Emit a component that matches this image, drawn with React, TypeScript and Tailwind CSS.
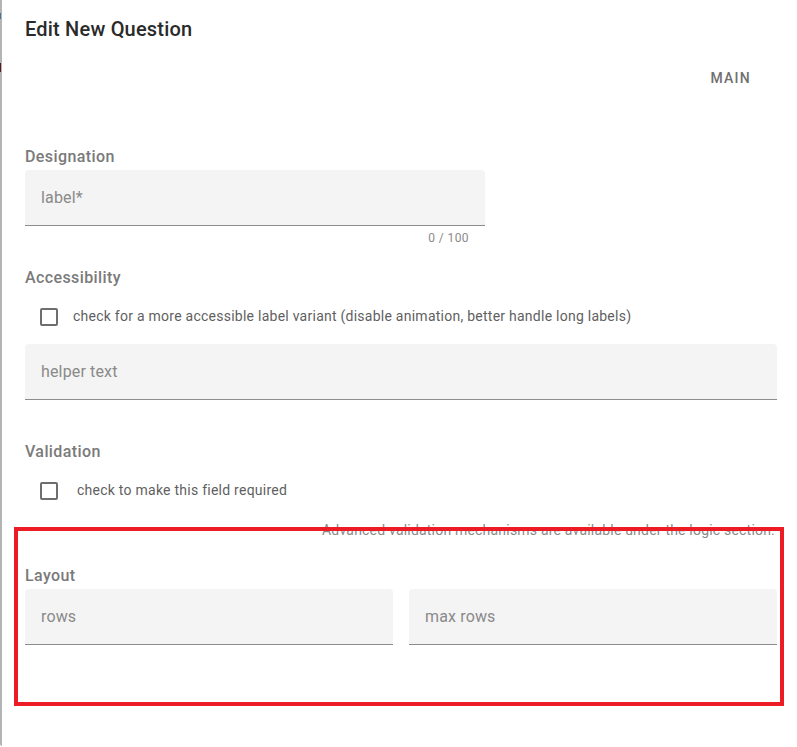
import React from "react";

function Field({ placeholder, className = "" }: { placeholder: string; className?: string }) {
  return (
    <div
      className={`h-14 flex items-center pl-4 bg-[#f4f4f4] rounded-t-[4px] border-b border-[#8c8c8c] ${className}`}
    >
      <span className="text-[16px] leading-6 tracking-[0.15px] text-[#8a8a8a]">{placeholder}</span>
    </div>
  );
}

function Check({ label, gap }: { label: string; gap: string }) {
  return (
    <div className={`flex items-center h-[18px] pl-[15px] ${gap}`}>
      <span className="w-[18px] h-[18px] shrink-0 rounded-[2px] border-2 border-[#6e6e6e] bg-white" />
      <span className="mb-[3px] text-[14px] leading-5 tracking-[0.25px] text-[#5f5f5f]">{label}</span>
    </div>
  );
}

export default function App() {
  return (
    <div
      className="relative w-full h-[747px] bg-white overflow-hidden"
      style={{ fontFamily: "Roboto, 'Noto Sans', Arial, sans-serif" }}
    >
      {/* dialog edge */}
      <div className="absolute left-0 top-0 bottom-[1px] w-[2px] bg-[#b4b4b4] rounded-bl-[4px]" />
      <div className="absolute left-0 top-[13px] w-[1px] h-[6px] bg-[#4a6fa8]" />
      <div className="absolute left-0 top-[63px] w-[1px] h-[9px] bg-[#5a1a1a]" />

      <div className="flex flex-col pl-[25px] pr-[20px]">
        <div className="mt-[13px] text-[20px] leading-8 font-medium tracking-[0.2px] text-[#2a2a2a]">
          Edit New Question
        </div>

        <div className="mt-[23px] flex justify-end pr-[26px]">
          <span className="text-[14px] leading-5 font-medium tracking-[1.25px] text-[#707070]">
            MAIN
          </span>
        </div>

        <div className="mt-[57px] text-[16px] leading-6 font-medium tracking-[0.4px] text-[#7a7a7a]">
          Designation
        </div>
        <Field placeholder="label*" className="mt-[1px] w-[460px]" />
        <div className="mt-[4px] w-[460px] pr-4 text-right text-[12px] leading-4 tracking-[0.4px] text-[#8a8a8a]">
          0 / 100
        </div>

        <div className="mt-[20px] text-[16px] leading-6 font-medium tracking-[0.4px] text-[#7a7a7a]">
          Accessibility
        </div>
        <div className="mt-[18px]">
          <Check
            label="check for a more accessible label variant (disable animation, better handle long labels)"
            gap="gap-[15px]"
          />
        </div>
        <Field placeholder="helper text" className="mt-[18px]" />

        <div className="mt-[40px] text-[16px] leading-6 font-medium tracking-[0.4px] text-[#7a7a7a]">
          Validation
        </div>
        <div className="mt-[18px]">
          <Check label="check to make this field required" gap="gap-[19px]" />
        </div>
        <div className="mt-[20px] pr-[2px] text-right text-[14px] leading-5 tracking-[0.2px] text-[#8a8a8a]">
          Advanced validation mechanisms are available under the logic section.
        </div>

        <div className="mt-[24px] text-[16px] leading-6 font-medium tracking-[0.4px] text-[#7a7a7a]">
          Layout
        </div>
        <div className="mt-[1px] grid grid-cols-2 gap-4">
          <Field placeholder="rows" />
          <Field placeholder="max rows" />
        </div>
      </div>

      {/* red highlight annotation */}
      <div className="absolute left-[14px] top-[527px] w-[770px] h-[179px] border-4 border-[#ed1c24]" />
    </div>
  );
}
